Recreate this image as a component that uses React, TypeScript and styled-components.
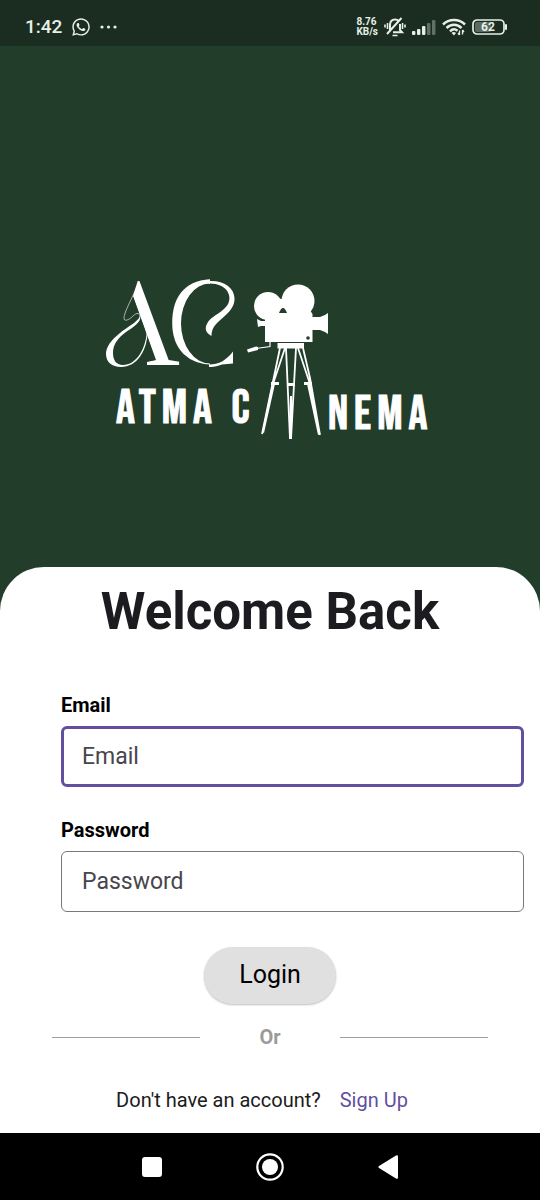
import React from 'react';
import styled, { createGlobalStyle } from 'styled-components';
import { FaWhatsapp } from 'react-icons/fa';

const GlobalStyle = createGlobalStyle`
  *, *::before, *::after { box-sizing: border-box; }
  body {
    margin: 0;
    background: #233d2b;
    font-family: Roboto, "Liberation Sans", sans-serif;
  }
`;

const Page = styled.div`
  display: flex;
  flex-direction: column;
  min-height: 100vh;
  background: #233d2b;
`;

const StatusBar = styled.header`
  display: flex;
  align-items: center;
  justify-content: space-between;
  height: 46px;
  padding: 8px 32px 0 25px;
  background: #1b2d20;
  color: #e6efe8;
`;

const StatusGroup = styled.div<{ $gap: number }>`
  display: flex;
  align-items: center;
  gap: ${({ $gap }) => $gap}px;
`;

const Clock = styled.time`
  font-size: 19px;
  line-height: 24px;
  font-weight: 500;
`;

const NetSpeed = styled.span`
  font-size: 10px;
  line-height: 10px;
  font-weight: 700;
`;

const Hero = styled.section`
  display: flex;
  flex: 1;
  align-items: center;
  justify-content: center;
  padding: 132px 24px 24px;
`;

const LogoArt = styled.svg`
  display: block;
  width: 100%;
  max-width: 340px;
`;

const Serif = styled.text<{ $size: number }>`
  font-family: "Liberation Serif", serif;
  font-size: ${({ $size }) => $size}px;
`;

const Wordmark = styled.text`
  font-family: "Bebas Neue", "Roboto Condensed", "Open Sans Condensed", "Liberation Sans Narrow", sans-serif;
  font-size: 47px;
  font-weight: 400;
  letter-spacing: 6px;
  stroke: #fff;
  stroke-width: 1px;
`;

const Card = styled.main`
  display: flex;
  flex-direction: column;
  align-items: center;
  padding: 12px 16px 20px;
  border-radius: 44px 44px 0 0;
  background: #fff;
`;

const Title = styled.h1`
  margin: 0 0 48px;
  color: #1c1b20;
  font-size: 51px;
  line-height: 66px;
  font-weight: 700;
`;

const Form = styled.form`
  display: flex;
  flex-direction: column;
  align-items: center;
  width: 100%;
`;

const Field = styled.div`
  display: flex;
  flex-direction: column;
  align-self: stretch;
  gap: 9px;
  margin: 0 0 31px 45px;
`;

const Label = styled.label`
  color: #000;
  font-size: 20px;
  line-height: 24px;
  font-weight: 700;
`;

const Input = styled.input<{ $active?: boolean }>`
  width: 100%;
  height: 61px;
  padding: 0 ${({ $active }) => ($active ? 18 : 20)}px;
  border: ${({ $active }) => ($active ? '3px solid #634f9f' : '1px solid #79767d')};
  border-radius: 6px;
  outline: none;
  background: #fff;
  color: #1c1b20;
  font-family: inherit;
  font-size: 23px;

  &::placeholder {
    color: #48464d;
    opacity: 1;
  }
`;

const LoginButton = styled.button`
  height: 57px;
  margin-top: 4px;
  padding: 0 35px 3px;
  border: 0;
  border-radius: 29px;
  background: #e0e0e0;
  box-shadow: 0 1px 2px rgba(0, 0, 0, 0.25);
  color: #000;
  font-family: inherit;
  font-size: 25px;
`;

const Divider = styled.div`
  display: grid;
  grid-template-columns: 1fr 140px 1fr;
  align-items: center;
  align-self: stretch;
  margin: 21px 36px 38px;
  color: #9a9a9a;
  font-size: 20px;
  line-height: 24px;
  font-weight: 700;
  text-align: center;

  &::before, &::after {
    content: "";
    height: 1px;
    background: #9e9e9e;
  }
`;

const SignUpRow = styled.p`
  display: flex;
  justify-content: center;
  gap: 19px;
  margin: 0 16px 0 0;
  color: #1c1b20;
  font-size: 20px;
  line-height: 26px;
`;

const SignUpLink = styled.a`
  color: #634f9f;
  text-decoration: none;
`;

const NavBar = styled.nav`
  display: flex;
  align-items: center;
  justify-content: center;
  gap: 88px;
  height: 67px;
  background: #000;
`;

const NavButton = styled.button`
  display: flex;
  padding: 0;
  border: 0;
  background: none;
`;

const BellOff = () => (
  <svg width="22" height="20" viewBox="0 0 22 20" fill="none" stroke="currentColor" strokeWidth="1.8" aria-hidden="true">
    <path d="M6 13V8C6 4 8 2.500 11 2.500c1.700 0 3 .6 3.800 1.500M16 7v6l2 2.200H9M3 17 17.500 1" strokeWidth="2" />
    <path d="M8.500 18.500h5M3.500 6v6M18.500 6v6M1 7.500v3M21 7.500v3" strokeWidth="1.600" />
  </svg>
);

const Signal = () => (
  <svg width="24" height="17" viewBox="0 0 24 17" fill="currentColor" aria-hidden="true">
    <rect x="0" y="12" width="3.400" height="4" rx="1" />
    <rect x="5" y="10" width="3.400" height="6" rx="1" />
    <rect x="10" y="7" width="3.400" height="9" rx="1" />
    <g opacity=".35">
      <rect x="15" y="4" width="3.400" height="12" rx="1" />
      <rect x="20" y="1" width="3.400" height="15" rx="1" />
    </g>
  </svg>
);

const Wifi = () => (
  <svg width="24" height="18" viewBox="0 0 24 18" fill="none" stroke="currentColor" strokeWidth="2.500" aria-hidden="true">
    <path d="M1 6.500c6-6 16-6 22 0M4.500 10c4.200-4.200 10.800-4.200 15 0M8 13.300c2.200-2.200 5.200-2.400 7.500-.6" />
    <path d="m9.500 15 2.500 2.500 2-2.500c-1.200-1.200-3.200-1.200-4.500 0Z" fill="currentColor" stroke="none" />
    <path d="M17.500 12.500V17M20.500 12v4.500M17.500 17l-1.500-2M20.500 12l1.500 2" strokeWidth="1.300" />
  </svg>
);

const Battery = () => (
  <svg width="36" height="16" viewBox="0 0 36 16" role="img" aria-label="Battery 62%">
    <rect x="3" y="3" width="16" height="10" rx="2" fill="#5c6a60" />
    <rect x="1" y="1" width="31" height="14" rx="4" fill="none" stroke="currentColor" strokeWidth="1.700" />
    <rect x="33" y="5" width="2" height="6" rx="1" fill="currentColor" />
    <text x="16" y="12" textAnchor="middle" fill="currentColor" fontSize="12" fontWeight="700">62</text>
  </svg>
);

const Logo = () => (
  <LogoArt viewBox="100 270 340 180" fill="#fff" role="img" aria-label="Atma Cinema">
    <defs>
      <clipPath id="a-stem">
        <path d="M138 279h10l40 80v14h-41v-12l9-2-23-64Z" />
      </clipPath>
      <clipPath id="c-bowl">
        <path clipRule="evenodd" d="M165 270h45v110h-45ZM210 282.500A29 40 0 0 0 210 362.500Z" />
      </clipPath>
    </defs>
    <Serif $size={126} x="89" y="364" clipPath="url(#a-stem)">A</Serif>
    <Serif $size={128} x="167" y="363" clipPath="url(#c-bowl)">C</Serif>

    {/* swashes around the monogram */}
    <path d="M137 285c-4 11-13 26-13 32 0 4 5 2 9-2s7-3 7 1-4 7-9 11M148 328c1-10 0-18-2-26" fill="none" stroke="#fff" strokeWidth="1" opacity=".6" />
    <path d="M140 315c-2 6-13 11-20 17-9 7-14 14-14 21 0 8 6 13 15 13 16 0 27-16 27-40h-1c0 22-11 38-24 38-7 0-10-5-10-12 0-9 5-15 13-21 7-5 15-9 14-16Z" />
    <path d="M209 280c14-1 25 6 25.500 17 .5 8-5 14-12 20-7 6-11 10-11 18-8-4-7-11-1-17 6-5 13-8 17-14 6-10-2-22-18.500-21.500Z" />
    <path d="M209 363.500c10 0 17-4 24-13v12l-11 1c-5 1.500-8 3-13 2.500Z" />

    {/* film camera */}
    <circle cx="268" cy="305" r="14" />
    <circle cx="298" cy="300" r="16.500" />
    <path fillRule="evenodd" d="M265 313v28h47.500v-28l-2-3H287l-4-3-4 3-14 3ZM279 312h8q-4-10-8 0Z" />
    <path d="M276 296l5 2h3l8 14h-5q-4-9-8 0h-8ZM312 316h8l5-2 3-2v21l-3-2-5-2h-8ZM257 318l4 2h5v5h-5l-3 1Z" />
    <path d="M279 312q4-10 8 0Z" fill="#233d2b" />
    <circle cx="308" cy="337" r="1.800" fill="#233d2b" />
    <path d="M277.500 342h26.500v5.500h-26.500Z" />
    <path d="M270 341v4.500l-14 2" fill="none" stroke="#fff" strokeWidth="1.200" />
    <path d="M247 348.500l9-3 2 .5v3l-10 2.500Z" />

    {/* tripod */}
    <path d="M280 347 262 433M285 347 273 383 262 433M286 347 290 438M296 347 291 438M298 347 310 383 320 434M303 347l7 30 10 57" fill="none" stroke="#fff" strokeWidth="1.800" />
    <path d="m290 395 2 0v43h-3ZM272 383h3l-11 49-2-1ZM307 383h3l10 50-2 1Z" />
    <path d="M271 381h8v3h-8ZM287 382h8v3h-8ZM304 381h8v3h-8Z" />

    <Wordmark x="116" y="422">ATMA C</Wordmark>
    <Wordmark x="328" y="428">NEMA</Wordmark>
  </LogoArt>
);

export default function App() {
  return (
    <>
      <GlobalStyle />
      <Page>
        <StatusBar>
          <StatusGroup $gap={9}>
            <Clock>1:42</Clock>
            <FaWhatsapp size={20} aria-hidden="true" />
            <svg width="17" height="4" viewBox="0 0 17 4" fill="currentColor" aria-hidden="true">
              <circle cx="2" cy="2" r="1.600" />
              <circle cx="8.500" cy="2" r="1.600" />
              <circle cx="15" cy="2" r="1.600" />
            </svg>
          </StatusGroup>
          <StatusGroup $gap={6}>
            <NetSpeed>
              8.76
              <br />
              KB/s
            </NetSpeed>
            <BellOff />
            <Signal />
            <Wifi />
            <Battery />
          </StatusGroup>
        </StatusBar>

        <Hero>
          <Logo />
        </Hero>

        <Card>
          <Title>Welcome Back</Title>
          <Form onSubmit={(event: React.FormEvent) => event.preventDefault()}>
            <Field>
              <Label htmlFor="email">Email</Label>
              <Input id="email" type="email" placeholder="Email" $active />
            </Field>
            <Field>
              <Label htmlFor="password">Password</Label>
              <Input id="password" type="password" placeholder="Password" />
            </Field>
            <LoginButton type="submit">Login</LoginButton>
          </Form>
          <Divider>Or</Divider>
          <SignUpRow>
            Don't have an account?
            <SignUpLink href="#signup">Sign Up</SignUpLink>
          </SignUpRow>
        </Card>

        <NavBar aria-label="System navigation">
          <NavButton type="button" aria-label="Recent apps">
            <svg width="30" height="30" viewBox="0 0 30 30" fill="#fff">
              <rect x="5" y="5" width="20" height="20" rx="3" />
            </svg>
          </NavButton>
          <NavButton type="button" aria-label="Home">
            <svg width="30" height="30" viewBox="0 0 30 30" fill="#fff">
              <circle cx="15" cy="15" r="12.700" fill="none" stroke="#fff" strokeWidth="2.200" />
              <circle cx="15" cy="15" r="8" />
            </svg>
          </NavButton>
          <NavButton type="button" aria-label="Back">
            <svg width="30" height="30" viewBox="0 0 30 30" fill="#fff">
              <path d="M6 14 23 3.500q2-1 2 1v21q0 2-2 1L6 16q-1.500-1 0-2Z" />
            </svg>
          </NavButton>
        </NavBar>
      </Page>
    </>
  );
}
